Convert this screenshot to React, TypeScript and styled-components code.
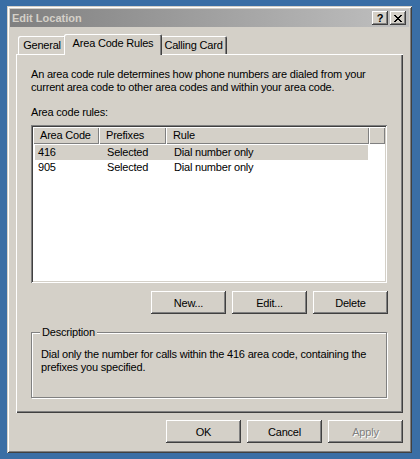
import React from "react";
import styled, { createGlobalStyle } from "styled-components";

const face = "#d4d0c8";

const GlobalStyle = createGlobalStyle`
  body {
    margin: 0;
    background: #3a6ea5;
    font-family: "Liberation Sans", Arial, sans-serif;
    font-size: 11px;
    letter-spacing: -0.2px;
    color: #000;
  }
`;

const raised = `
  box-shadow: inset -1px -1px #404040, inset 1px 1px #fff,
    inset -2px -2px #808080, inset 2px 2px ${face};
`;

const Window = styled.div`
  box-sizing: border-box;
  width: 405px;
  height: 447px;
  margin: 6px 0 0 7px;
  padding: 3px;
  background: ${face};
  box-shadow: inset 1px 1px ${face}, inset -1px -1px #404040,
    inset 2px 2px #fff, inset -2px -2px #808080;
  display: flex;
  flex-direction: column;
`;

const TitleBar = styled.div`
  height: 18px;
  display: flex;
  align-items: center;
  padding: 0 3px 0 2px;
  background: linear-gradient(to right, #808080, #c0c0c0);
`;

const Title = styled.div`
  flex: 1;
  font-weight: bold;
  letter-spacing: 0;
  color: ${face};
`;

const TitleButton = styled.div<{ $gap?: boolean }>`
  width: 16px;
  height: 14px;
  margin-left: ${(p) => (p.$gap ? "2px" : "0")};
  background: ${face};
  ${raised}
  display: flex;
  align-items: center;
  justify-content: center;
  font-weight: bold;
  font-size: 11px;
  line-height: 14px;
`;

const Body = styled.div`
  padding: 6px 0 0 6px;
  display: flex;
  flex-direction: column;
`;

const TabRow = styled.div`
  display: flex;
  align-items: flex-end;
  height: 21px;
  padding-left: 2px;
  position: relative;
  z-index: 1;
`;

const Tab = styled.div<{ $active?: boolean; $w: number }>`
  box-sizing: border-box;
  width: ${(p) => p.$w}px;
  height: ${(p) => (p.$active ? 21 : 18)}px;
  margin: 0 ${(p) => (p.$active ? -2 : 0)}px ${(p) => (p.$active ? -1 : 0)}px;
  background: ${face};
  border-radius: 2px 2px 0 0;
  box-shadow: inset 1px 1px #fff, inset -1px 0 #404040, inset -2px 0 #808080;
  display: flex;
  justify-content: center;
  padding-top: 3px;
  z-index: ${(p) => (p.$active ? 2 : 0)};
`;

const Panel = styled.div`
  box-sizing: border-box;
  width: 387px;
  height: 359px;
  padding: 14px 15px 0 15px;
  box-shadow: inset 1px 1px #fff, inset -1px -1px #404040,
    inset -2px -2px #808080;
`;

const Para = styled.div`
  line-height: 13px;
  white-space: nowrap;
`;

const Label = styled.div`
  margin-top: 12px;
  line-height: 13px;
`;

const List = styled.div`
  box-sizing: border-box;
  margin-top: 6px;
  width: 356px;
  height: 158px;
  padding: 2px;
  background: #fff;
  box-shadow: inset 1px 1px #808080, inset -1px -1px #fff,
    inset 2px 2px #404040, inset -2px -2px ${face};
`;

const Header = styled.div`
  display: flex;
  height: 17px;
`;

const HeadCell = styled.div<{ $w?: number }>`
  box-sizing: border-box;
  ${(p) => (p.$w ? `width: ${p.$w}px;` : "flex: 1;")}
  background: ${face};
  box-shadow: inset 1px 1px #fff, inset -1px -1px #808080;
  padding: 2px 0 0 7px;
  line-height: 13px;
`;

const Row = styled.div<{ $selected?: boolean }>`
  display: flex;
  width: 333px;
  height: 15px;
  margin: ${(p) => (p.$selected ? "1px" : "0")} 0 0 2px;
  background: ${(p) => (p.$selected ? face : "transparent")};
  line-height: 15px;
`;

const Cell = styled.div<{ $w: number; $pad: number }>`
  box-sizing: border-box;
  width: ${(p) => p.$w}px;
  padding-left: ${(p) => p.$pad}px;
  white-space: nowrap;
`;

const ButtonRow = styled.div<{ $top: number }>`
  display: flex;
  justify-content: flex-end;
  gap: 6px;
  margin-top: ${(p) => p.$top}px;
`;

const Button = styled.div<{ $disabled?: boolean }>`
  box-sizing: border-box;
  width: 75px;
  height: 23px;
  background: ${face};
  ${raised}
  display: flex;
  align-items: center;
  justify-content: center;
  color: ${(p) => (p.$disabled ? "#808080" : "#000")};
  text-shadow: ${(p) => (p.$disabled ? "1px 1px #fff" : "none")};
`;

const GroupBox = styled.div`
  position: relative;
  box-sizing: border-box;
  width: 356px;
  height: 66px;
  margin-top: 18px;
  border: 1px solid #808080;
  box-shadow: inset 1px 1px #fff, 1px 1px #fff;
  padding: 15px 9px 0 9px;
  line-height: 13px;
  white-space: nowrap;
`;

const Legend = styled.div`
  position: absolute;
  top: -7px;
  left: 8px;
  padding: 0 2px;
  background: ${face};
  line-height: 13px;
`;

const Footer = styled.div`
  width: 387px;
`;

const CloseGlyph = () => (
  <svg width="8" height="7" viewBox="0 0 8 7" shapeRendering="crispEdges">
    <path
      d="M0 0h2v1H0zM6 0h2v1H6zM1 1h2v1H1zM5 1h2v1H5zM2 2h4v1H2zM3 3h2v1H3zM2 4h4v1H2zM1 5h2v1H1zM5 5h2v1H5zM0 6h2v1H0zM6 6h2v1H6z"
      fill="#000"
    />
  </svg>
);

const rules = [
  { code: "416", prefixes: "Selected", rule: "Dial number only", selected: true },
  { code: "905", prefixes: "Selected", rule: "Dial number only" },
];

export default function App() {
  return (
    <>
      <GlobalStyle />
      <Window>
        <TitleBar>
          <Title>Edit Location</Title>
          <TitleButton>?</TitleButton>
          <TitleButton $gap>
            <CloseGlyph />
          </TitleButton>
        </TitleBar>
        <Body>
          <TabRow>
            <Tab $w={48}>General</Tab>
            <Tab $w={98} $active>
              Area Code Rules
            </Tab>
            <Tab $w={67}>Calling Card</Tab>
          </TabRow>
          <Panel>
            <Para>
              An area code rule determines how phone numbers are dialed from your
              <br />
              current area code to other area codes and within your area code.
            </Para>
            <Label>Area code rules:</Label>
            <List>
              <Header>
                <HeadCell $w={66}>Area Code</HeadCell>
                <HeadCell $w={67}>Prefixes</HeadCell>
                <HeadCell $w={203}>Rule</HeadCell>
                <HeadCell />
              </Header>
              {rules.map((r) => (
                <Row key={r.code} $selected={r.selected}>
                  <Cell $w={64} $pad={3}>
                    {r.code}
                  </Cell>
                  <Cell $w={67} $pad={8}>
                    {r.prefixes}
                  </Cell>
                  <Cell $w={202} $pad={8}>
                    {r.rule}
                  </Cell>
                </Row>
              ))}
            </List>
            <ButtonRow $top={8}>
              <Button>New...</Button>
              <Button>Edit...</Button>
              <Button>Delete</Button>
            </ButtonRow>
            <GroupBox>
              <Legend>Description</Legend>
              Dial only the number for calls within the 416 area code, containing the
              <br />
              prefixes you specified.
            </GroupBox>
          </Panel>
          <Footer>
            <ButtonRow $top={7}>
              <Button>OK</Button>
              <Button>Cancel</Button>
              <Button $disabled>Apply</Button>
            </ButtonRow>
          </Footer>
        </Body>
      </Window>
    </>
  );
}
